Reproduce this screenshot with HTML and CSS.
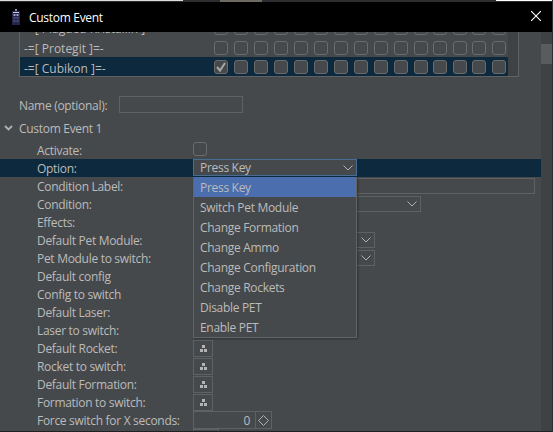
FILE: index.html
```html
<!DOCTYPE html>
<html lang="en">
<head>
<meta charset="utf-8">
<title>Custom Event</title>
<link rel="stylesheet" href="styles.css">
</head>
<body>
<div class="window">
  <div class="backdrop"><span class="b-white"></span><span class="b-dark"><span class="b-sliver"></span></span><span class="b-white2"></span></div>
  <header class="titlebar">
    <svg class="app-icon" width="10" height="16" viewBox="0 0 10 16"><rect x="4" y="0" width="2" height="2" fill="#8a8fb0"/><rect x="1" y="2" width="8" height="14" fill="#23264a"/><rect x="2" y="3" width="6" height="1" fill="#c8c8d8"/><rect x="2.5" y="5" width="2" height="2" fill="#9a9cc0"/><rect x="5.5" y="5" width="2" height="2" fill="#9a9cc0"/><rect x="2.5" y="8" width="2" height="2" fill="#4a4d78"/><rect x="5.5" y="8" width="2" height="2" fill="#4a4d78"/><rect x="2.5" y="11" width="2" height="2" fill="#4a4d78"/><rect x="5.5" y="11" width="2" height="2" fill="#4a4d78"/></svg>
    <span class="title">Custom Event</span>
    <svg class="close" width="10" height="10" viewBox="0 0 10 10"><path d="M0 0L10 10M10 0L0 10" stroke="#fff" stroke-width="1.1" fill="none"/></svg>
  </header>
  <div class="body">
    <main class="content">
      <div class="table-frame">
        <div class="table-rows">
          <div class="trow"><span class="tname">-=[ Plagued Kristallin ]=-</span><div class="boxes" id="b0"></div></div>
          <div class="trow"><span class="tname">-=[ Protegit ]=-</span><div class="boxes" id="b1"></div></div>
          <div class="trow sel"><span class="tname">-=[ Cubikon ]=-</span><div class="boxes" id="b2"></div></div>
        </div>
        <div class="table-scroll"></div>
      </div>
      <div class="name-row"><span class="name-lab">Name (optional):</span><span class="input name-input"></span></div>
      <div class="group-row"><svg class="chev-group" width="9" height="6" viewBox="0 0 9 6"><path d="M1 1L4.5 4.5L8 1" stroke="#afb1b3" stroke-width="1.8" fill="none"/></svg><span>Custom Event 1</span></div>
      <div class="form">
        <div class="row first"><span class="lab">Activate:</span><span class="check"></span></div>
        <div class="row active"><span class="lab">Option:</span><span class="combo focus"><span class="combo-text">Press Key</span><svg class="chev" width="10" height="6" viewBox="0 0 10 6"><path d="M0.5 0.5L5 5L9.5 0.5" stroke="#afb1b3" fill="none"/></svg></span>
          <ul class="popup">
            <li class="on">Press Key</li><li>Switch Pet Module</li><li>Change Formation</li><li>Change Ammo</li><li>Change Configuration</li><li>Change Rockets</li><li>Disable PET</li><li>Enable PET</li>
          </ul>
        </div>
        <div class="row"><span class="lab">Condition Label:</span><span class="input cond-input"></span></div>
        <div class="row"><span class="lab">Condition:</span><span class="combo cond-combo"><svg class="chev" width="10" height="6" viewBox="0 0 10 6"><path d="M0.5 0.5L5 5L9.5 0.5" stroke="#afb1b3" fill="none"/></svg></span></div>
        <div class="row"><span class="lab">Effects:</span></div>
        <div class="row"><span class="lab">Default Pet Module:</span><span class="combo pet-combo"><svg class="chev" width="10" height="6" viewBox="0 0 10 6"><path d="M0.5 0.5L5 5L9.5 0.5" stroke="#afb1b3" fill="none"/></svg></span></div>
        <div class="row"><span class="lab">Pet Module to switch:</span><span class="combo pet-combo"><svg class="chev" width="10" height="6" viewBox="0 0 10 6"><path d="M0.5 0.5L5 5L9.5 0.5" stroke="#afb1b3" fill="none"/></svg></span></div>
        <div class="row"><span class="lab">Default config</span></div>
        <div class="row"><span class="lab">Config to switch</span></div>
        <div class="row"><span class="lab">Default Laser:</span></div>
        <div class="row"><span class="lab">Laser to switch:</span></div>
        <div class="row"><span class="lab">Default Rocket:</span><span class="tree-btn"><svg width="7" height="7" viewBox="0 0 7 7"><path d="M2 0h3v3H2zM0 4h3v3H0zM4 4h3v3H4z" fill="#b4b4b4"/></svg></span></div>
        <div class="row"><span class="lab">Rocket to switch:</span><span class="tree-btn"><svg width="7" height="7" viewBox="0 0 7 7"><path d="M2 0h3v3H2zM0 4h3v3H0zM4 4h3v3H4z" fill="#b4b4b4"/></svg></span></div>
        <div class="row"><span class="lab">Default Formation:</span><span class="tree-btn"><svg width="7" height="7" viewBox="0 0 7 7"><path d="M2 0h3v3H2zM0 4h3v3H0zM4 4h3v3H4z" fill="#b4b4b4"/></svg></span></div>
        <div class="row"><span class="lab">Formation to switch:</span><span class="tree-btn"><svg width="7" height="7" viewBox="0 0 7 7"><path d="M2 0h3v3H2zM0 4h3v3H0zM4 4h3v3H4z" fill="#b4b4b4"/></svg></span></div>
        <div class="row"><span class="lab">Force switch for X seconds:</span><span class="spinner"><span class="spin-val">0</span><span class="spin-btn"><svg width="11" height="11" viewBox="0 0 11 11"><path d="M5.5 0.5L10.5 5.5L5.5 10.5L0.5 5.5Z" stroke="#afb1b3" fill="none"/></svg></span></span></div>
        <div class="row cut"><span class="lab"></span><span class="input cut-input"></span></div>
      </div>
    </main>
    <div class="scrollbar"><span class="thumb"></span></div>
  </div>
  <div class="bottom-edge"></div>
</div>
<script src="app.js"></script>
</body>
</html>
```

FILE: styles.css
```css
* { box-sizing: border-box; }
html, body { margin: 0; padding: 0; background: #46494b; }
body { font: 12px "Open Sans", "Noto Sans", sans-serif; letter-spacing: -0.3px; color: #bbbbbb; overflow: hidden; }
.window { width: 553px; height: 432px; display: flex; flex-direction: column; overflow: hidden; border-right: 1px solid #2b2d2e; }
.backdrop { height: 2px; display: flex; overflow: hidden; background: #2b2d2e; flex: none; }
.b-white { width: 183px; height: 1px; background: #ddd; }
.b-dark { flex: 1; }
.b-sliver { display: block; width: 42px; height: 2px; margin-left: 37px; background: #6d6a62; }
.b-white2 { width: 56px; height: 1px; background: #fff; }
.titlebar { height: 30px; background: #000; color: #fff; display: flex; align-items: center; padding: 0 11px; flex: none; }
.app-icon { margin-right: 8px; }
.title { flex: 1; }
.close { margin-bottom: 2px; }
.body { flex: 1; display: flex; min-height: 0; }
.content { flex: 1; min-width: 0; overflow: hidden; }
.scrollbar { width: 11px; background: #3e4244; padding-top: 12px; flex: none; }
.thumb { display: block; height: 20px; background: #585c5f; }
.bottom-edge { height: 1px; background: #1f2021; flex: none; }
.table-frame { margin-left: 19px; width: 500px; height: 45px; border: 1px solid #5f6163; border-top: 0; display: flex; overflow: hidden; }
.table-rows { flex: 1; display: flex; flex-direction: column; justify-content: flex-end; background: #46494b; }
.table-scroll { width: 10px; background: #3e4244; }
.trow { height: 20px; flex: none; display: flex; align-items: center; justify-content: space-between; }
.trow.sel { height: 19px; background: #0d293e; }
.tname { padding: 3px 0 0 4px; letter-spacing: 0; }
.boxes { display: grid; grid-template-columns: repeat(10, 20px) 19px 20px 19px 20px 16px; padding-top: 1px; }
.box { width: 14px; height: 14px; border: 1px solid #6b6b6b; border-radius: 3px; display: block; background: #46494b; }
.box svg { display: block; }
.name-row { margin: 19px 0 0 19px; height: 17px; display: flex; align-items: center; }
.name-lab { width: 100px; padding-top: 1px; }
.input { display: block; border: 1px solid #5f6163; }
.name-input { width: 124px; height: 17px; }
.group-row { height: 18px; margin-top: 6px; display: flex; align-items: center; padding-left: 4px; gap: 6px; }
.form { margin-top: 4px; }
.row { height: 18px; display: flex; align-items: center; padding-left: 37px; position: relative; }
.row.active { background: #0d293e; }
.lab { width: 156px; flex: none; padding-top: 1px; }
.first .lab { padding-top: 0; }
.check { width: 14px; height: 14px; border: 1px solid #6b6b6b; border-radius: 3px; display: block; margin-bottom: 2px; }
.combo { height: 17px; border: 1px solid #5f6163; display: flex; align-items: center; padding: 0 3px 0 6px; }
.combo .chev { margin-left: auto; }
.combo.focus { width: 164px; background: #46494b; border-color: #466d94; align-self: flex-start; }
.cond-combo { width: 228px; height: 16px; }
.pet-combo { width: 182px; height: 16px; }
.cond-input { width: 342px; height: 16px; }
.popup { position: absolute; left: 193px; top: 18px; width: 164px; margin: 0; padding: 0; list-style: none; background: #46494b; border: 1px solid #646464; border-top: 0; box-shadow: 1px 1px 2px rgba(0,0,0,.35); z-index: 2; }
.popup li { height: 20px; line-height: 21px; padding-left: 6px; }
.popup li.on { background: #4b6eaf; }
.tree-btn { width: 20px; height: 17px; border: 1px solid #5f6163; display: flex; align-items: center; justify-content: center; }
.spinner { width: 79px; height: 18px; border: 1px solid #5f6163; display: flex; }
.spin-val { flex: 1; text-align: right; padding-right: 5px; line-height: 17px; }
.spin-btn { width: 16px; border-left: 1px solid #5f6163; display: flex; align-items: center; justify-content: center; }
.cut { align-items: flex-start; }
.cut-input { width: 26px; height: 16px; }
```

FILE: app.js
```js
['b0','b1','b2'].forEach(function (id) {
  var el = document.getElementById(id);
  for (var i = 0; i < 15; i++) {
    var b = document.createElement('span');
    b.className = 'box';
    if (id === 'b2' && i === 0) {
      b.innerHTML = '<svg width="12" height="12" viewBox="0 0 12 12"><path d="M2 6L5 9.5L10 2" stroke="#a8a8a8" stroke-width="2" fill="none"/></svg>';
    }
    el.appendChild(b);
  }
});
```
